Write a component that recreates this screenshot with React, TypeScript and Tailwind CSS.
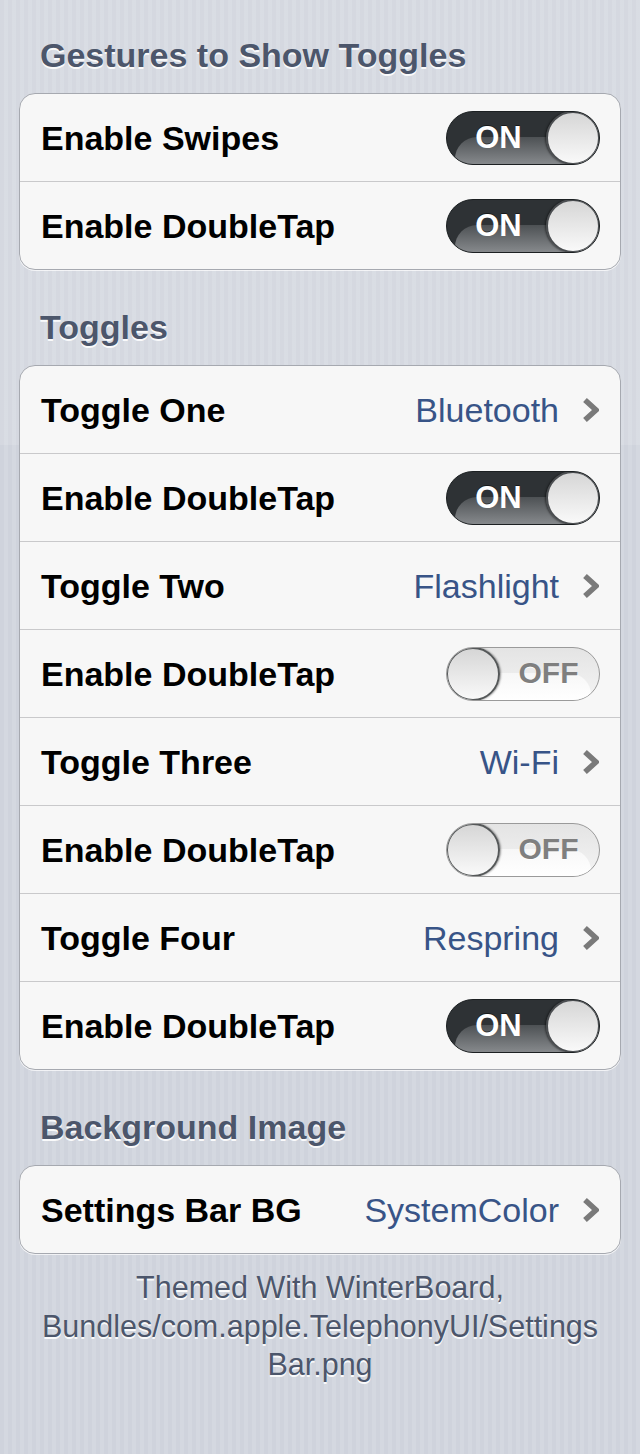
import React from "react";

type Row =
  | { kind: "toggle"; label: string; on: boolean }
  | { kind: "link"; label: string; value: string };

function Toggle({ on }: { on: boolean }) {
  if (on) {
    return (
      <div className="relative w-[154px] h-[54px] rounded-full border border-[#1c2022] overflow-hidden bg-[#2e3235] shrink-0">
        <div className="absolute left-[8px] right-0 bottom-0 h-[27px] rounded-tl-[22px] bg-[linear-gradient(to_bottom,#4d5154,#86898c)]" />
        <div className="absolute inset-y-0 left-0 w-[103px] flex items-center justify-center text-white text-[31px] font-bold leading-none pb-[1px] [text-shadow:0_-1px_0_rgba(0,0,0,0.5)]">
          ON
        </div>
        <div className="absolute right-[-1px] top-[-1px] w-[54px] h-[54px] rounded-full border-[2px] border-[#4a4d50] bg-[linear-gradient(to_bottom,#d6d6d6,#f9f9f9)] shadow-[-1px_0_2px_rgba(0,0,0,0.5)]" />
      </div>
    );
  }
  return (
    <div className="relative w-[154px] h-[54px] rounded-full border border-[#9a9a9a] overflow-hidden bg-[linear-gradient(to_bottom,#e4e4e4,#f4f4f4)] shrink-0">
      <div className="absolute left-0 right-[8px] bottom-0 h-[27px] rounded-tr-[22px] bg-[linear-gradient(to_bottom,#f7f7f7,#ffffff)]" />
      <div className="absolute inset-y-0 right-0 w-[101px] flex items-center justify-center text-[#7f7f7f] text-[30px] font-bold leading-none pb-[1px] [text-shadow:0_1px_0_rgba(255,255,255,0.9)]">
        OFF
      </div>
      <div className="absolute left-[-1px] top-[-1px] w-[54px] h-[54px] rounded-full border-[2px] border-[#555859] bg-[linear-gradient(to_bottom,#d6d6d6,#f9f9f9)] shadow-[1px_0_2px_rgba(0,0,0,0.4)]" />
    </div>
  );
}

function Chevron() {
  return (
    <svg width="17" height="26" viewBox="0 0 17 26" className="shrink-0">
      <polyline
        points="3,3 14,13 3,23"
        fill="none"
        stroke="#7a7a7a"
        strokeWidth="5.5"
        strokeLinejoin="miter"
      />
    </svg>
  );
}

function Group({ rows }: { rows: Row[] }) {
  return (
    <div className="mx-[19px] rounded-[16px] border border-[#a6a9b0] bg-[#f7f7f7] overflow-hidden shadow-[0_1px_0_rgba(255,255,255,0.7)]">
      {rows.map((r, i) => {
        const h = i === 0 ? "h-[87px]" : "h-[88px]";
        return (
          <div
            key={i}
            className={`${h} flex items-center pl-[21px] ${
              r.kind === "toggle" ? "pr-[20px]" : "pr-[21px]"
            } ${i > 0 ? "border-t border-[#c9c9cb]" : ""}`}
          >
            <div className="flex-1 text-[34px] font-bold text-black leading-none">{r.label}</div>
            {r.kind === "toggle" ? (
              <Toggle on={r.on} />
            ) : (
              <div className="flex items-center gap-[23px]">
                <span className="text-[34px] text-[#385487] leading-none">{r.value}</span>
                <Chevron />
              </div>
            )}
          </div>
        );
      })}
    </div>
  );
}

function Header({ children, first }: { children: React.ReactNode; first?: boolean }) {
  return (
    <div
      className={`px-[40px] text-[34px] leading-[40px] font-bold text-[#4c566b] [text-shadow:0_2px_0_rgba(255,255,255,0.9)] mb-[18px] ${
        first ? "pt-[35px]" : "mt-[37px]"
      }`}
    >
      {children}
    </div>
  );
}

export default function App() {
  const toggles: Row[] = [
    { kind: "link", label: "Toggle One", value: "Bluetooth" },
    { kind: "toggle", label: "Enable DoubleTap", on: true },
    { kind: "link", label: "Toggle Two", value: "Flashlight" },
    { kind: "toggle", label: "Enable DoubleTap", on: false },
    { kind: "link", label: "Toggle Three", value: "Wi-Fi" },
    { kind: "toggle", label: "Enable DoubleTap", on: false },
    { kind: "link", label: "Toggle Four", value: "Respring" },
    { kind: "toggle", label: "Enable DoubleTap", on: true },
  ];
  return (
    <div className="w-[640px] min-h-[1454px] font-['Liberation_Sans',Arial,sans-serif] bg-[linear-gradient(to_bottom,rgba(255,255,255,0.12)_0px,rgba(255,255,255,0.12)_445px,transparent_445px),repeating-linear-gradient(90deg,#cfd3dc_0px,#cfd3dc_4px,#d4d8e0_4px,#d4d8e0_8px)] bg-[#d1d5dd] pb-[60px]">
      <Header first>Gestures to Show Toggles</Header>
      <Group
        rows={[
          { kind: "toggle", label: "Enable Swipes", on: true },
          { kind: "toggle", label: "Enable DoubleTap", on: true },
        ]}
      />
      <Header>Toggles</Header>
      <Group rows={toggles} />
      <Header>Background Image</Header>
      <Group rows={[{ kind: "link", label: "Settings Bar BG", value: "SystemColor" }]} />
      <div className="mt-[14px] px-[20px] text-center text-[30.5px] leading-[38.5px] text-[#4c566b] [text-shadow:0_2px_0_rgba(255,255,255,0.9)]">
        Themed With WinterBoard,
        <br />
        Bundles/com.apple.TelephonyUI/Settings
        <br />
        Bar.png
      </div>
    </div>
  );
}
